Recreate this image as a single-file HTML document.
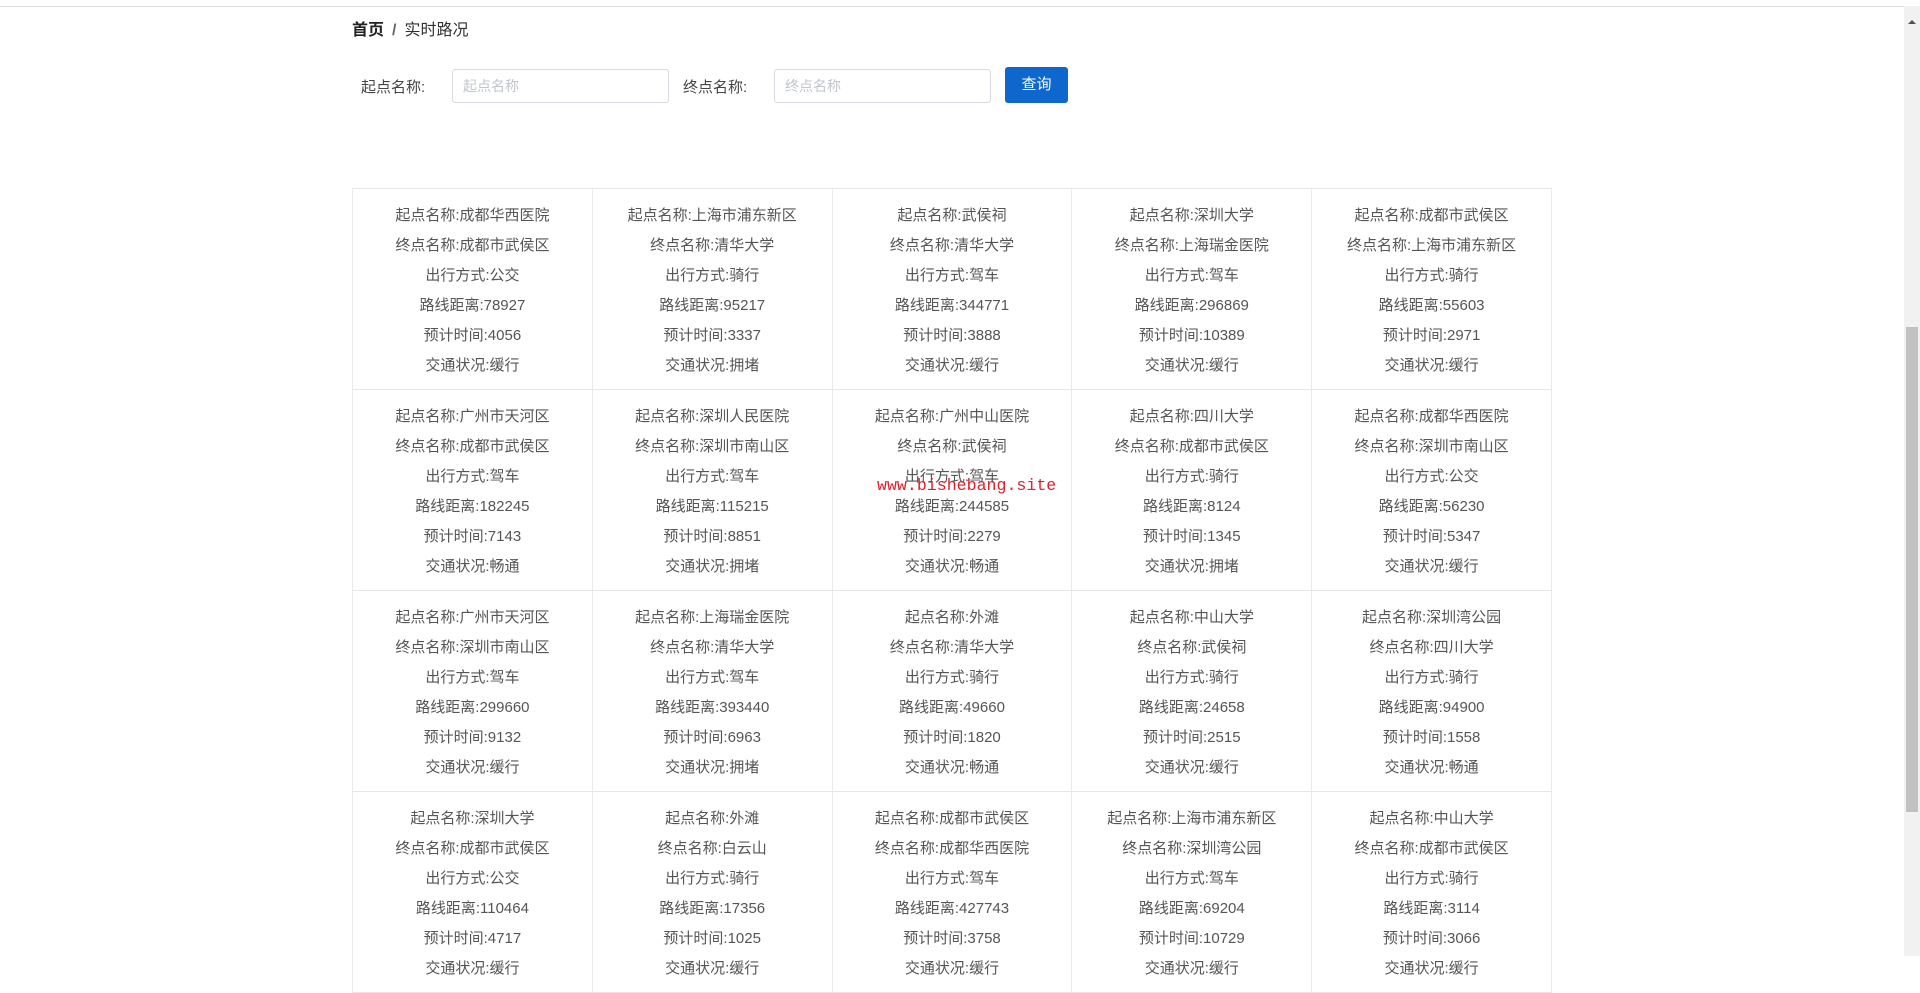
<!DOCTYPE html>
<html><head><meta charset="utf-8"><style>
html,body{margin:0;padding:0;background:#fff;overflow:hidden;width:1920px;height:956px;font-family:"Liberation Sans","Noto Sans CJK SC",sans-serif;}
.topline{position:absolute;left:0;top:6px;width:1904px;height:1px;background:#dcdcdc}
.bc{position:absolute;left:352px;top:16px;font-size:16px;color:#303133}
.bc b{font-weight:bold;color:#222}
.bc span.sep{margin:0 8px;color:#666;font-weight:bold}
.lbl{position:absolute;top:76px;font-size:15px;color:#444}
.inp{position:absolute;top:69px;height:34px;width:216px;border:1px solid #d6d9e0;border-radius:3px;box-sizing:border-box;font-size:14px;color:#c0c4cc;line-height:32px;padding-left:10px}
.btn{position:absolute;left:1005px;top:67px;width:63px;height:36px;background:#0e67cc;border-radius:3px;color:#fff;font-size:15px;text-align:center;line-height:36px}
.tbl{position:absolute;left:352px;top:188px;width:1199px;border-top:1px solid #e6e6e6;border-left:1px solid #ebebeb}
.row{display:flex;height:201px;border-bottom:1px solid #e6e6e6;box-sizing:border-box}
.cell{width:240px;border-right:1px solid #ebebeb;box-sizing:border-box;text-align:center;font-size:15px;color:#555;padding-top:16px}
.cell div{height:30px;line-height:22px}
.wm{position:absolute;left:877px;top:476px;font-family:"Liberation Mono",monospace;font-size:16.6px;color:#e0202c}
.sb{position:absolute;right:0;top:6px;width:16px;height:950px;background:#f1f1f1}
.th{position:absolute;right:2px;top:321px;width:12px;height:485px;background:#c1c1c1}
.ar{position:absolute;right:4px;top:14px;width:0;height:0;border-left:4px solid transparent;border-right:4px solid transparent;border-bottom:4px solid #505050}
</style></head><body>
<div class="topline"></div>
<div class="bc"><b>首页</b><span class="sep">/</span>实时路况</div>
<div class="lbl" style="left:361px">起点名称:</div>
<div class="inp" style="left:452px;width:217px">起点名称</div>
<div class="lbl" style="left:683px">终点名称:</div>
<div class="inp" style="left:774px;width:217px">终点名称</div>
<div class="btn">查询</div>
<div class="tbl" id="t"></div>
<div class="wm">www.bishebang.site</div>
<div class="sb"><div class="ar"></div><div class="th"></div></div>
<script>
var d=[
["成都华西医院","成都市武侯区","公交","78927","4056","缓行"],
["上海市浦东新区","清华大学","骑行","95217","3337","拥堵"],
["武侯祠","清华大学","驾车","344771","3888","缓行"],
["深圳大学","上海瑞金医院","驾车","296869","10389","缓行"],
["成都市武侯区","上海市浦东新区","骑行","55603","2971","缓行"],
["广州市天河区","成都市武侯区","驾车","182245","7143","畅通"],
["深圳人民医院","深圳市南山区","驾车","115215","8851","拥堵"],
["广州中山医院","武侯祠","驾车","244585","2279","畅通"],
["四川大学","成都市武侯区","骑行","8124","1345","拥堵"],
["成都华西医院","深圳市南山区","公交","56230","5347","缓行"],
["广州市天河区","深圳市南山区","驾车","299660","9132","缓行"],
["上海瑞金医院","清华大学","驾车","393440","6963","拥堵"],
["外滩","清华大学","骑行","49660","1820","畅通"],
["中山大学","武侯祠","骑行","24658","2515","缓行"],
["深圳湾公园","四川大学","骑行","94900","1558","畅通"],
["深圳大学","成都市武侯区","公交","110464","4717","缓行"],
["外滩","白云山","骑行","17356","1025","缓行"],
["成都市武侯区","成都华西医院","驾车","427743","3758","缓行"],
["上海市浦东新区","深圳湾公园","驾车","69204","10729","缓行"],
["中山大学","成都市武侯区","骑行","3114","3066","缓行"]];
var h="";
for(var r=0;r<4;r++){h+='<div class="row">';for(var c=0;c<5;c++){var x=d[r*5+c];
h+='<div class="cell"><div>起点名称:'+x[0]+'</div><div>终点名称:'+x[1]+'</div><div>出行方式:'+x[2]+'</div><div>路线距离:'+x[3]+'</div><div>预计时间:'+x[4]+'</div><div>交通状况:'+x[5]+'</div></div>';}
h+='</div>';}
document.getElementById("t").innerHTML=h;
</script>
</body></html>
